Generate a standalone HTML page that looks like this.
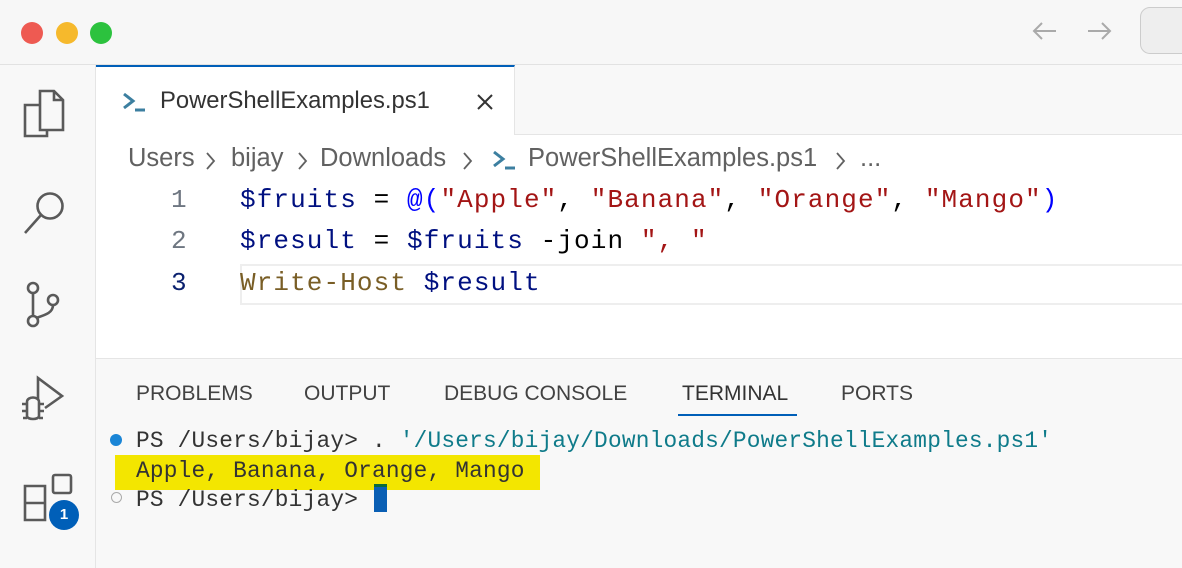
<!DOCTYPE html>
<html><head><style>
body{margin:0;width:1182px;height:568px;overflow:hidden;background:#f8f8f8;position:relative;font-family:"Liberation Sans",sans-serif}
.a{position:absolute}
.mono{font-family:"Liberation Mono","DejaVu Sans Mono",monospace;white-space:pre}
.code{font-size:26px;letter-spacing:1.1px}
.term{font-size:22.8px;letter-spacing:0.2px;color:#333}
.bc{position:absolute;top:144px;font-size:25.5px;color:#616161;white-space:pre}
</style></head><body>
<!-- title bar -->
<div class="a" style="left:0;top:0;width:1182px;height:64px;background:#f7f7f7;border-bottom:1px solid #e2e2e2"></div>
<div class="a" style="left:21px;top:22px;width:22px;height:22px;border-radius:50%;background:#ee5a52"></div>
<div class="a" style="left:56px;top:22px;width:22px;height:22px;border-radius:50%;background:#f6b92c"></div>
<div class="a" style="left:90px;top:22px;width:22px;height:22px;border-radius:50%;background:#2cc23e"></div>
<svg class="a" style="left:1030px;top:18px" width="90" height="28" viewBox="0 0 90 28" fill="none" stroke="#aaa" stroke-width="2"><path d="M4 13h22M12 5l-8 8 8 8"/><path d="M58 13h22M72 5l8 8-8 8"/></svg>
<div class="a" style="left:1140px;top:7px;width:60px;height:45px;border:1.5px solid #ccc;border-radius:10px;background:#eee"></div>
<!-- activity bar -->
<div class="a" style="left:0;top:65px;width:95px;height:503px;background:#f8f8f8;border-right:1px solid #e5e5e5"></div>
<svg class="a" style="left:0;top:65px" width="95" height="503" viewBox="0 65 95 503" fill="none" stroke="#5a5a5a" stroke-width="2.6">
<path d="M40 91h14l9 9v30H40z M54 91v9h9 M40 105H25v31h22v-6"/>
<circle cx="50" cy="206" r="12.5"/><path d="M41 215L25 233"/>
<circle cx="33" cy="288" r="5"/><circle cx="53" cy="300" r="5"/><circle cx="33" cy="321" r="5"/><path d="M33 293v23 M53 305c0 8-8 10-17 13"/>
<path d="M38 400v-22l24 18-17 12"/>
<path d="M27 402c0-6 12-6 12 0v14c0 4-12 4-12 0z M22 404h5 M39 404h5 M22 411h5 M39 411h5 M23 418h4 M39 418h4"/>
<rect x="53" y="475" width="18" height="18" rx="2"/><path d="M25 486h20v34H25z M25 503h20 M45 503h0"/>
</svg>
<div class="a" style="left:49px;top:500px;width:30px;height:30px;border-radius:50%;background:#005fb8;color:#fff;font-size:15px;font-weight:bold;text-align:center;line-height:30px">1</div>
<!-- tab -->
<div class="a" style="left:96px;top:65px;width:418px;height:70px;background:#fff;border-top:2px solid #005fb8;border-right:1px solid #e5e5e5"></div>
<div class="a" style="left:514px;top:134px;width:668px;height:1px;background:#e5e5e5"></div>
<svg class="a" style="left:122px;top:91px" width="26" height="22" viewBox="0 0 26 22" fill="none" stroke="#3c7fa0" stroke-width="3"><path d="M2 3l9 7-9 7 M13 19h10"/></svg>
<div class="a" style="left:160px;top:87px;font-size:23.8px;color:#333">PowerShellExamples.ps1</div>
<svg class="a" style="left:475px;top:92px" width="20" height="20" viewBox="0 0 20 20" stroke="#333" stroke-width="2"><path d="M3 3l14 14M17 3L3 17"/></svg>
<!-- editor -->
<div class="a" style="left:96px;top:135px;width:1086px;height:223px;background:#fff;border-bottom:1px solid #e5e5e5"></div>
<div class="bc" style="left:128px">Users</div>
<div class="bc" style="left:231px">bijay</div>
<div class="bc" style="left:320px">Downloads</div>
<div class="bc" style="left:528px">PowerShellExamples.ps1</div>
<div class="bc" style="left:860px">...</div>
<svg class="a" style="left:200px;top:149px" width="680" height="24" viewBox="0 0 680 24" fill="none" stroke="#616161" stroke-width="1.8"><path d="M7 4l7 8-7 8 M99 4l7 8-7 8 M264 4l7 8-7 8 M637 4l7 8-7 8"/></svg>
<svg class="a" style="left:492px;top:149px" width="26" height="22" viewBox="0 0 26 22" fill="none" stroke="#3c7fa0" stroke-width="3"><path d="M2 3l9 7-9 7 M13 19h10"/></svg>
<div class="a" style="left:240px;top:264px;width:942px;height:37px;border:2px solid #eee;border-right:none"></div>
<div class="a mono" style="left:171px;top:185px;font-size:26px;color:#6e7681">1</div>
<div class="a mono" style="left:171px;top:226px;font-size:26px;color:#6e7681">2</div>
<div class="a mono" style="left:171px;top:268px;font-size:26px;color:#0b216f">3</div>
<div class="a mono code" style="left:240px;top:185px;color:#000"><span style="color:#001080">$fruits</span> = <span style="color:#0000ff">@(</span><span style="color:#a31515">"Apple"</span>, <span style="color:#a31515">"Banana"</span>, <span style="color:#a31515">"Orange"</span>, <span style="color:#a31515">"Mango"</span><span style="color:#0000ff">)</span></div>
<div class="a mono code" style="left:240px;top:226px;color:#000"><span style="color:#001080">$result</span> = <span style="color:#001080">$fruits</span> -join <span style="color:#a31515">", "</span></div>
<div class="a mono code" style="left:240px;top:268px;color:#000"><span style="color:#795e26">Write-Host</span> <span style="color:#001080">$result</span></div>
<!-- panel -->
<div class="a" style="left:136px;top:382px;font-size:21px;color:#424242;white-space:pre">PROBLEMS</div>
<div class="a" style="left:304px;top:382px;font-size:21px;color:#424242">OUTPUT</div>
<div class="a" style="left:444px;top:382px;font-size:21px;color:#424242">DEBUG CONSOLE</div>
<div class="a" style="left:682px;top:382px;font-size:21px;color:#333">TERMINAL</div>
<div class="a" style="left:678px;top:414px;width:119px;height:2px;background:#005fb8"></div>
<div class="a" style="left:841px;top:382px;font-size:21px;color:#424242">PORTS</div>
<div class="a" style="left:115px;top:455px;width:425px;height:35px;background:#f3e600"></div>
<div class="a" style="left:110px;top:434px;width:12px;height:12px;border-radius:50%;background:#1a85d6"></div>
<div class="a" style="left:111px;top:492px;width:9px;height:9px;border-radius:50%;border:1.5px solid #aaa"></div>
<div class="a mono term" style="left:136px;top:428px">PS /Users/bijay&gt; . <span style="color:#0f7b8a">'/Users/bijay/Downloads/PowerShellExamples.ps1'</span></div>
<div class="a mono term" style="left:136px;top:458px">Apple, Banana, Orange, Mango</div>
<div class="a mono term" style="left:136px;top:487px">PS /Users/bijay&gt;</div>
<div class="a" style="left:374px;top:484px;width:13px;height:28px;background:#0a5fb4;border-top:3px solid #0b6b3a;box-sizing:border-box"></div>
</body></html>
